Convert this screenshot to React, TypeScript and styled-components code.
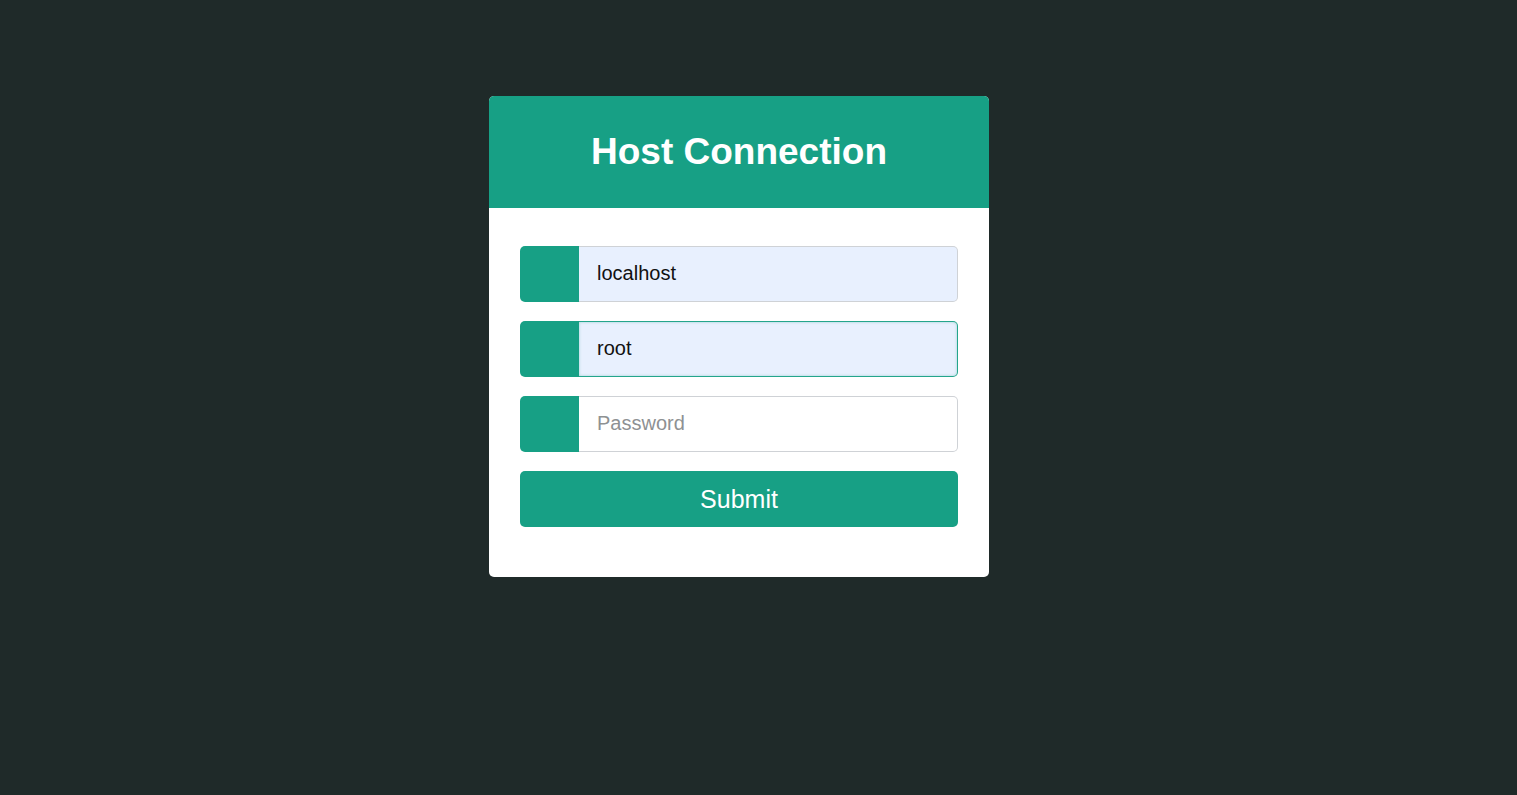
import React from "react";
import styled, { createGlobalStyle, css } from "styled-components";

const Global = createGlobalStyle`
  html, body { margin: 0; padding: 0; background: #1f2a29; }
  body { font-family: "Liberation Sans", Arial, sans-serif; }
  * { box-sizing: border-box; }
`;

const Page = styled.div`
  min-height: 795px;
  display: flex;
  justify-content: center;
  padding-top: 96px;
  padding-right: 39px;
`;

const Card = styled.div`
  width: 500px;
  height: 481px;
  background: #ffffff;
  border-radius: 5px;
  overflow: hidden;
  display: flex;
  flex-direction: column;
`;

const Header = styled.div`
  height: 112px;
  background: #17a085;
  display: flex;
  align-items: center;
  justify-content: center;
`;

const Title = styled.h1`
  margin: 0;
  color: #ffffff;
  font-size: 37px;
  font-weight: 700;
  font-family: "Liberation Sans", Arial, sans-serif;
`;

const Body = styled.form`
  padding: 38px 31px 0;
  display: flex;
  flex-direction: column;
  gap: 19px;
`;

const Field = styled.div`
  display: flex;
  height: 56px;
`;

const IconBox = styled.div`
  width: 59px;
  flex: none;
  background: #17a085;
  border-radius: 5px 0 0 5px;
`;

const Input = styled.input<{ $filled?: boolean; $active?: boolean }>`
  flex: 1;
  min-width: 0;
  height: 100%;
  border: 1px solid #cfd2d6;
  border-left: none;
  border-radius: 0 5px 5px 0;
  padding: 0 18px 2px;
  font-size: 20px;
  font-family: "Liberation Sans", Arial, sans-serif;
  color: #111;
  background: ${(p) => (p.$filled ? "#e8f0fe" : "#ffffff")};
  outline: none;
  &::placeholder { color: #8e9193; }
  ${(p) =>
    p.$active &&
    css`
      border-color: #24a58c;
      box-shadow: inset 0 0 3px rgba(23, 160, 133, 0.35);
    `}
`;

const Submit = styled.button`
  height: 56px;
  border: none;
  border-radius: 5px;
  background: #17a085;
  color: #ffffff;
  font-size: 25px;
  font-family: "Liberation Sans", Arial, sans-serif;
  cursor: pointer;
`;

export default function App() {
  return (
    <>
      <Global />
      <Page>
        <Card>
          <Header>
            <Title>Host Connection</Title>
          </Header>
          <Body onSubmit={(e) => e.preventDefault()}>
            <Field>
              <IconBox />
              <Input $filled defaultValue="localhost" />
            </Field>
            <Field>
              <IconBox />
              <Input $filled $active defaultValue="root" />
            </Field>
            <Field>
              <IconBox />
              <Input type="password" placeholder="Password" />
            </Field>
            <Submit type="submit">Submit</Submit>
          </Body>
        </Card>
      </Page>
    </>
  );
}
